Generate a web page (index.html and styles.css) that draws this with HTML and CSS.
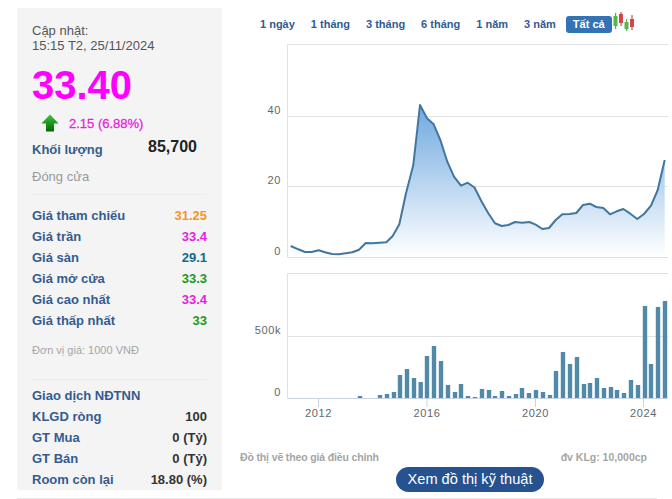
FILE: index.html
```html
<!DOCTYPE html>
<html lang="vi">
  <head>
    <meta charset="UTF-8" />
    <meta name="viewport" content="width=device-width, initial-scale=1.0" />
    <title>Biểu đồ giá</title>
    <link rel="stylesheet" href="styles.css">
  </head>

  <body>
    <div class="page">
      <div class="side">
        <div class="update">Cập nhật:<br />15:15 T2, 25/11/2024</div>
        <div class="price">33.40</div>
        <div class="change">
          <svg class="arrow" width="18" height="18" viewBox="0 0 18 18">
            <defs>
              <linearGradient id="arrowFill" x1="0" y1="0" x2="0" y2="1">
                <stop offset="0" stop-color="#3fc43f" />
                <stop offset="1" stop-color="#006a00" />
              </linearGradient>
            </defs>
            <path d="M9 0.5 L17.5 9.5 H13 V17.5 H5 V9.5 H0.5 Z" fill="url(#arrowFill)" />
          </svg>
          <span>2.15 (6.88%)</span>
        </div>
        <div class="volume">
          <span class="label">Khối lượng</span>
          <span class="volume-num">85,700</span>
        </div>
        <div class="status">Đóng cửa</div>

        <div class="block">
          <div class="row"><span class="label">Giá tham chiếu</span><span class="orange">31.25</span></div>
          <div class="row"><span class="label">Giá trần</span><span class="pink">33.4</span></div>
          <div class="row"><span class="label">Giá sàn</span><span class="teal">29.1</span></div>
          <div class="row"><span class="label">Giá mở cửa</span><span class="green">33.3</span></div>
          <div class="row"><span class="label">Giá cao nhất</span><span class="pink">33.4</span></div>
          <div class="row"><span class="label">Giá thấp nhất</span><span class="green">33</span></div>
        </div>
        <div class="unit">Đơn vị giá: 1000 VNĐ</div>

        <div class="block foreign">
          <div class="row"><span class="label">Giao dịch NĐTNN</span></div>
          <div class="row"><span class="label">KLGD ròng</span><span class="dark">100</span></div>
          <div class="row"><span class="label">GT Mua</span><span class="dark">0 (Tỷ)</span></div>
          <div class="row"><span class="label">GT Bán</span><span class="dark">0 (Tỷ)</span></div>
          <div class="row"><span class="label">Room còn lại</span><span class="dark">18.80 (%)</span></div>
        </div>
      </div>

      <div class="main">
        <div class="tabs">
          <a class="tab">1 ngày</a>
          <a class="tab">1 tháng</a>
          <a class="tab">3 tháng</a>
          <a class="tab">6 tháng</a>
          <a class="tab">1 năm</a>
          <a class="tab">3 năm</a>
          <a class="tab active">Tất cả</a>
          <svg class="candles" width="24" height="22" viewBox="613 12 24 22">
            <path d="M615.7 13V29M626.7 19V31" stroke="#3f8f3f" fill="none" />
            <path d="M621 12V26M632 15V30" stroke="#a33" fill="none" />
            <rect x="613.5" y="16" width="4" height="10" fill="#4fb84f" />
            <rect x="619" y="14" width="4" height="9" fill="#d9434a" />
            <rect x="624.5" y="22" width="4" height="7" fill="#4fb84f" />
            <rect x="630" y="19" width="4" height="8" fill="#d9434a" />
          </svg>
        </div>

        <svg class="chart" width="432" height="385" viewBox="240 40 432 385">
          <defs>
            <linearGradient id="areaFill" gradientUnits="userSpaceOnUse" x1="0" y1="105" x2="0" y2="257">
              <stop offset="0" stop-color="#6fa8e0" />
              <stop offset="1" stop-color="#ffffff" />
            </linearGradient>
          </defs>

          <!-- gia -->
          <path class="grid" d="M287.5 257V44.5H668M287.5 116.5H668M287.5 186.5H668M287.5 257.5H668" />
          <text class="axis" x="281" y="114" text-anchor="end">40</text>
          <text class="axis" x="281" y="184" text-anchor="end">20</text>
          <text class="axis" x="281" y="255" text-anchor="end">0</text>
          <path fill="url(#areaFill)" d="M290.7 257V246L298.3 249.3 305 252 311.7 252 318.7 250.3 325 252.3 332 254 338.7 254.3 345.7 253.3 352.3 252.3 359 249.7 365.7 243 372.3 243.3 379.3 242.7 386.3 242.3 392.7 236 399.3 224.3 406 193.3 413.3 165 420 105 427 118.3 433.7 124.3 440.7 141 447.3 161.7 454 176.7 461 185.7 467.7 182.7 474.5 187.5 481.7 201.7 488.3 213.3 495 223.3 501.7 226 508.3 225 515 222 522.3 222.7 529.3 222 535.7 224.7 542.3 229 549 228 555.7 220 562.3 214.3 569.3 214 576.3 213 583 205 589.7 203.7 596.3 207 603.3 208 610 214.3 616.7 211.3 623.3 209 630.3 213.7 637.3 219 644 214 651 205.7 657.7 190 664.7 160V257Z" />
          <path class="line" d="M290.7 246L298.3 249.3 305 252 311.7 252 318.7 250.3 325 252.3 332 254 338.7 254.3 345.7 253.3 352.3 252.3 359 249.7 365.7 243 372.3 243.3 379.3 242.7 386.3 242.3 392.7 236 399.3 224.3 406 193.3 413.3 165 420 105 427 118.3 433.7 124.3 440.7 141 447.3 161.7 454 176.7 461 185.7 467.7 182.7 474.5 187.5 481.7 201.7 488.3 213.3 495 223.3 501.7 226 508.3 225 515 222 522.3 222.7 529.3 222 535.7 224.7 542.3 229 549 228 555.7 220 562.3 214.3 569.3 214 576.3 213 583 205 589.7 203.7 596.3 207 603.3 208 610 214.3 616.7 211.3 623.3 209 630.3 213.7 637.3 219 644 214 651 205.7 657.7 190 664.7 160" />

          <!-- khoi luong -->
          <path class="grid" d="M287.5 398V273.5H668M287.5 336.5H668" />
          <path class="base" d="M287.5 398.5H668M318.5 398V407M427 398V407M535.5 398V407M643.5 398V407" />
          <text class="axis" x="281" y="334" text-anchor="end">500k</text>
          <text class="axis" x="281" y="396" text-anchor="end">0</text>
          <path class="bars" d="M360 396V398M380 395V398M387 394V398M394 392V398M400 375V398M407 369V398M414 378V398M420.7 382V398M427 356V398M434 346V398M441 361V398M448 385V398M455 392V398M461 384V398M468 396V398M475 397V398M482 389V398M489 390V398M495 396V398M502 391V398M509 396V398M516 394V398M522 388V398M529 393V398M536 390V398M543 392V398M550 395V398M556 371V398M563 352V398M570 364V398M577 357V398M584 384V398M590 383V398M597 378V398M604 388V398M611 387V398M617 390V398M624 393V398M631 380V398M638 385V398M645 306V398M651 364V398M658 307V398M665 301V398" />
          <text class="axis" x="318.5" y="417" text-anchor="middle">2012</text>
          <text class="axis" x="427" y="417" text-anchor="middle">2016</text>
          <text class="axis" x="535.5" y="417" text-anchor="middle">2020</text>
          <text class="axis" x="643.5" y="417" text-anchor="middle">2024</text>
        </svg>

        <div class="notes">
          <span class="note-left">Đồ thị vẽ theo giá điều chỉnh</span>
          <span>đv KLg: 10,000cp</span>
        </div>
        <a class="tech-btn">Xem đồ thị kỹ thuật</a>
      </div>
    </div>
    <div class="bottom-line"></div>
  </body>
</html>
```

FILE: styles.css
```css
html, body {
  margin: 0;
  padding: 0;
  height: 499px;
  overflow: hidden;
  background: #fff;
  font-family: "Liberation Sans", Arial, sans-serif;
}

.page {
  display: flex;
  padding: 8px 0 0 17px;
  height: 482px;
}

/* cot trai */
.side {
  width: 175px;
  height: 482px;
  padding: 0 15px;
  background: #f4f4f5;
  flex-shrink: 0;
}

.update {
  padding-top: 15px;
  font-size: 13px;
  line-height: 15px;
  color: #555;
}

.price {
  margin-top: 9px;
  font-size: 40px;
  line-height: 46px;
  font-weight: bold;
  color: #f0f;
}

.change {
  display: flex;
  align-items: center;
  height: 20px;
  margin-top: 5px;
  padding-left: 9px;
  font-size: 13px;
  color: #e61fe0;
  -webkit-text-stroke: 0.3px #e61fe0;
}

.arrow {
  margin-right: 10px;
}

.volume {
  display: flex;
  justify-content: space-between;
  align-items: center;
  height: 24px;
  margin-top: 4px;
  padding-right: 10px;
}

.label {
  font-size: 13px;
  font-weight: bold;
  color: #345c8e;
}

.volume-num {
  margin-bottom: 4px;
  font-size: 16px;
  font-weight: bold;
  color: #222;
}

.status {
  margin-top: 8px;
  padding-bottom: 9px;
  font-size: 13px;
  line-height: 16px;
  color: #999;
  border-bottom: 1px solid #ececec;
}

.block {
  padding-top: 10px;
}

.row {
  display: flex;
  justify-content: space-between;
  height: 21px;
  line-height: 21px;
  font-size: 13px;
  font-weight: bold;
}

.orange { color: #f7941d; }
.pink { color: #e61fe0; }
.teal { color: #0f6a8c; }
.green { color: #1e9a1e; }
.dark { color: #333; }

.unit {
  padding-top: 13px;
  padding-bottom: 22px;
  font-size: 11px;
  line-height: 13px;
  color: #a5a5a5;
  border-bottom: 1px solid #ececec;
}

.foreign {
  padding-top: 5px;
}

/* cot phai */
.main {
  width: 432px;
  margin-left: 18px;
  flex-shrink: 0;
}

.tabs {
  display: flex;
  align-items: flex-start;
  height: 32px;
  padding-left: 13px;
}

.tab {
  margin-top: 8px;
  margin-right: 2px;
  padding: 0 7px;
  height: 17px;
  line-height: 17px;
  font-size: 11px;
  font-weight: bold;
  color: #2f5c92;
}

.tab.active {
  margin-left: 1px;
  margin-right: 1px;
  background: #3373b5;
  color: #fff;
  border-radius: 3px;
}

.candles {
  margin-top: 4px;
}

.chart {
  display: block;
}

.grid {
  fill: none;
  stroke: #e2e2e6;
  stroke-width: 1;
}

.base {
  fill: none;
  stroke: #c8d4e4;
  stroke-width: 1;
}

.line {
  fill: none;
  stroke: #41779f;
  stroke-width: 2;
  stroke-linejoin: round;
}

.bars {
  fill: none;
  stroke: #5189a8;
  stroke-width: 4.4;
}

.axis {
  font-size: 11px;
  letter-spacing: 0.6px;
  fill: #666;
}

.notes {
  display: flex;
  justify-content: space-between;
  padding: 25px 25px 0 0;
  font-size: 10.5px;
  font-weight: bold;
  line-height: 14px;
  color: #a5a5a5;
}

.note-left {
  letter-spacing: -0.14px;
}

.tech-btn {
  display: block;
  width: 148px;
  height: 25px;
  margin: 3px 0 0 156px;
  line-height: 25px;
  font-size: 14.6px;
  text-align: center;
  color: #fff;
  background: #26528f;
  border-radius: 13px;
}

.bottom-line {
  width: 640px;
  height: 1px;
  margin: 8px 0 0 17px;
  background: #e8e8e8;
}
```
